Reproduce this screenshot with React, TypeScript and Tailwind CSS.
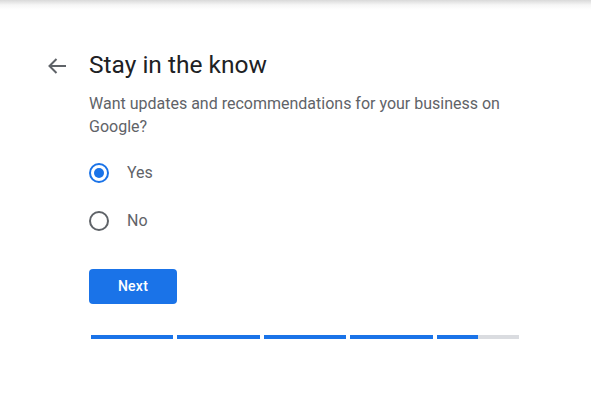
import { useState } from "react";

const options = ["Yes", "No"];
const steps = [100, 100, 100, 100, 50];

export default function App() {
  const [choice, setChoice] = useState("Yes");

  return (
    <div className="min-h-screen bg-white font-['Roboto',sans-serif]">
      <div className="h-[10px] bg-linear-to-b from-[#d9d9d9] via-[#f6f6f6] to-white" />

      <div className="flex pl-[48px] pt-[39px]">
        <button type="button" className="mt-[9px] h-[16px] w-[18px] shrink-0 text-[#5f6368]">
          <svg viewBox="0 0 18 16" width="18" height="16" fill="none" stroke="currentColor" strokeWidth="2">
            <path d="M18 8H1.5M8.5 1L1.5 8l7 7" />
          </svg>
        </button>

        <div className="ml-[23px] w-[430px]">
          <h1 className="text-[24.5px] leading-[32px] text-[#202124]">Stay in the know</h1>
          <p className="mt-[11px] text-[16px] leading-[23px] text-[#5f6368]">
            Want updates and recommendations for your business on Google?
          </p>

          <div className="mt-[23px] flex flex-col gap-[24px]">
            {options.map((opt) => {
              const selected = choice === opt;
              return (
                <label key={opt} className="flex h-[24px] cursor-pointer items-center" onClick={() => setChoice(opt)}>
                  <span
                    className={`flex h-[20px] w-[20px] items-center justify-center rounded-full border-2 ${
                      selected ? "border-[#1a73e8]" : "border-[#5f6368]"
                    }`}
                  >
                    {selected && <span className="h-[10px] w-[10px] rounded-full bg-[#1a73e8]" />}
                  </span>
                  <span className="ml-[18px] text-[16px] text-[#5f6368]">{opt}</span>
                </label>
              );
            })}
          </div>

          <button
            type="button"
            className="mt-[36px] h-[35px] w-[88px] rounded-[4px] bg-[#1a73e8] text-[14px] font-medium tracking-[0.25px] text-white"
          >
            Next
          </button>

          <div className="ml-[2px] mt-[31px] flex w-[428px] gap-[4px]">
            {steps.map((pct, i) => (
              <div key={i} className="h-[4px] flex-1 bg-[#dadce0]">
                <div className="h-full bg-[#1a73e8]" style={{ width: `${pct}%` }} />
              </div>
            ))}
          </div>
        </div>
      </div>
    </div>
  );
}
